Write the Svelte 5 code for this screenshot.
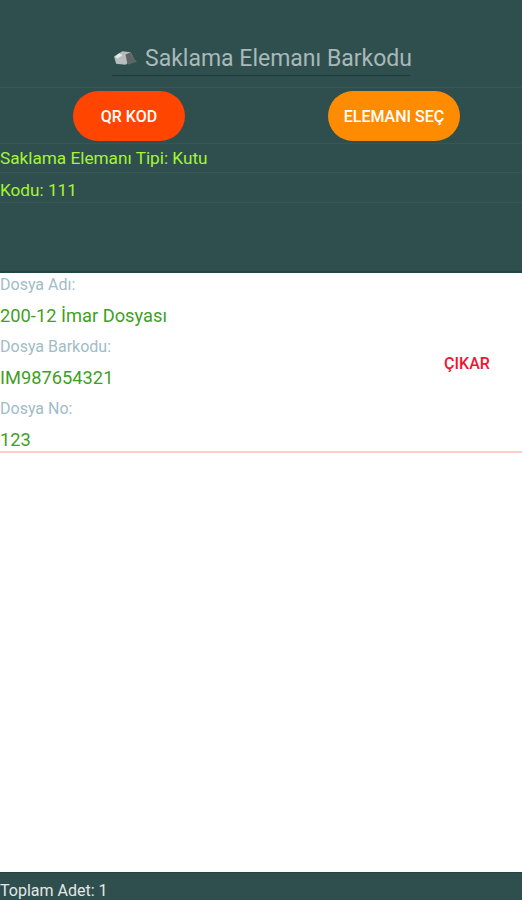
<script lang="ts">
	const fields = [
		{ label: 'Dosya Adı:', value: '200-12 İmar Dosyası' },
		{ label: 'Dosya Barkodu:', value: 'IM987654321' },
		{ label: 'Dosya No:', value: '123' }
	];
</script>

<div class="page">
	<header class="top">
		<div class="title-row">
			<h1 class="title">
				<svg class="box" viewBox="0 0 24 16" width="25" height="17" aria-hidden="true">
					<path d="M1 7 L9 2 L17 3 L20 9 L12 15 L3 14 Z" fill="#b9bcbc" />
					<path d="M12 5 L17 3 L20 9 L23 12 L14 15 Z" fill="#5f6566" />
					<path d="M2 7 L6 4 L9 6 L4 9 Z" fill="#e8e8e8" />
				</svg>
				Saklama Elemanı Barkodu
			</h1>
		</div>
		<div class="actions">
			<button type="button" class="pill red">QR KOD</button>
			<button type="button" class="pill orange">ELEMANI SEÇ</button>
		</div>
		<div class="info first">Saklama Elemanı Tipi: Kutu</div>
		<div class="info">Kodu: 111</div>
	</header>

	<main class="list">
		<div class="item">
			<div class="fields">
				{#each fields as f}
					<div class="label">{f.label}</div>
					<div class="value">{f.value}</div>
				{/each}
			</div>
			<button type="button" class="remove">ÇIKAR</button>
		</div>
	</main>

	<footer class="bottom">Toplam Adet: 1</footer>
</div>

<style>
	:global(body) {
		margin: 0;
		background: #fff;
	}
	.page {
		width: 522px;
		height: 900px;
		display: flex;
		flex-direction: column;
		font-family: Roboto, 'Liberation Sans', sans-serif;
		overflow: hidden;
	}
	.top {
		height: 273px;
		box-sizing: border-box;
		background: #2f4f4f;
		border-bottom: 2px solid #1f4645;
		flex: none;
	}
	.title-row {
		height: 88px;
		box-sizing: border-box;
		padding-top: 43px;
		border-bottom: 1px solid #385656;
		display: flex;
		justify-content: center;
	}
	.title {
		margin: 0;
		height: 33px;
		box-sizing: border-box;
		width: 298px;
		border-bottom: 1px solid #1d3a3a;
		color: #a9b8b8;
		font-size: 23px;
		font-weight: 400;
		line-height: 31px;
		display: flex;
		align-items: flex-start;
		gap: 7px;
		white-space: nowrap;
	}
	.box {
		flex: none;
		margin: 6px 0 0 1px;
	}
	.actions {
		height: 56px;
		box-sizing: border-box;
		border-bottom: 1px solid #385656;
		padding: 3px 62px 0 73px;
		display: flex;
		justify-content: space-between;
	}
	.pill {
		height: 50px;
		border: 0;
		border-radius: 25px;
		color: #fff;
		font-family: inherit;
		font-size: 16px;
		font-weight: 500;
		padding: 0;
	}
	.red {
		width: 112px;
		background: #ff4500;
	}
	.orange {
		width: 132px;
		background: #ff8c00;
	}
	.info {
		height: 30px;
		line-height: 35px;
		font-size: 17.2px;
		color: #a6f52f;
		border-bottom: 1px solid #385656;
		box-sizing: border-box;
	}
	.info.first {
		height: 29px;
		line-height: 29px;
	}
	.list {
		flex: 1;
		background: #fff;
	}
	.item {
		height: 180px;
		box-sizing: border-box;
		border-bottom: 2px solid #ffcccc;
		display: flex;
		align-items: center;
		justify-content: space-between;
	}
	.fields {
		display: grid;
		padding-top: 8px;
	}
	.label {
		height: 24px;
		line-height: 24px;
		font-size: 16px;
		color: #9fbcc8;
	}
	.value {
		height: 38px;
		line-height: 38px;
		font-size: 18.3px;
		color: #3f9f1f;
	}
	.remove {
		width: 90px;
		margin: 2px 10px 0 0;
		border: 0;
		background: none;
		color: #f0142f;
		font-family: inherit;
		font-size: 16px;
		font-weight: 500;
		padding: 0;
	}
	.bottom {
		height: 28px;
		flex: none;
		box-sizing: border-box;
		background: #2f4f4f;
		border-top: 1px solid #1f4645;
		color: #e6e6e6;
		font-size: 16px;
		padding-top: 8px;
		line-height: 20px;
	}
</style>
